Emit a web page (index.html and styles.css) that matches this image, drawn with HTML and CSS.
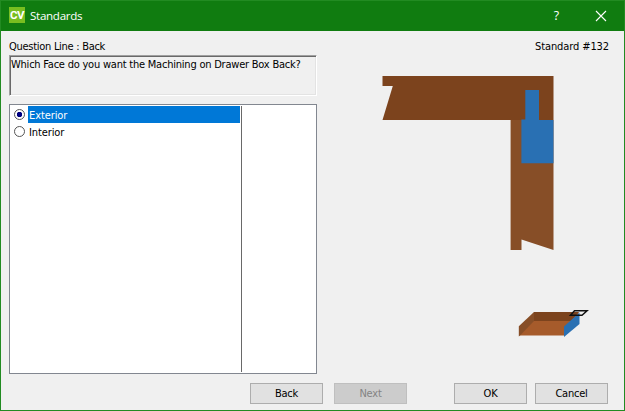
FILE: index.html
```html
<!DOCTYPE html>
<html lang="en">
<head>
<meta charset="utf-8">
<title>Standards</title>
<link rel="stylesheet" href="styles.css">
</head>
<body>
<div class="window">
  <header class="titlebar">
    <span class="logo">CV</span>
    <span class="title">Standards</span>
    <span class="help">?</span>
    <svg class="close" width="12" height="12" viewBox="0 0 12 12"><path d="M1 1L11 11M11 1L1 11" stroke="#fff" stroke-width="1.1" fill="none"/></svg>
  </header>
  <main class="content">
    <section class="left">
      <div class="question-label">Question Line : Back</div>
      <div class="question">Which Face do you want the Machining on Drawer Box Back?</div>
      <div class="list">
        <div class="options">
          <label class="option"><span class="radio checked"></span><span class="option-text selected">Exterior</span></label>
          <label class="option"><span class="radio"></span><span class="option-text">Interior</span></label>
        </div>
        <div class="second"></div>
      </div>
    </section>
    <section class="right">
      <div class="standard">Standard #132</div>
      <svg class="preview" width="284" height="319" viewBox="325 55 284 319">
        <path d="M382.5 76H553.5V120H382.5L392.8 86H382.5Z" fill="#7c431d"/>
        <path d="M510.6 120H553.5V250L521.5 239.5V250H510.6Z" fill="#874e27"/>
        <path d="M525.3 90H539V120H553.5V163.3H521.4V119.5H525.3Z" fill="#2970b3"/>
        <path d="M534 312.5H579L564.5 335.5H519Z" fill="#a65b2b"/>
        <path d="M534 312H579L571 321H534Z" fill="#7c431d"/>
        <path d="M534 312V321L520 335.5L518.8 336.5V326.3Z" fill="#874e27"/>
        <path d="M579.5 312.5V324L564 337V326.5Z" fill="#2970b3"/>
        <path d="M574.5 310.8H587L582 315.2H570.5Z" fill="none" stroke="#111" stroke-width="1.5"/>
      </svg>
    </section>
  </main>
  <footer class="buttons">
    <button class="back">Back</button>
    <button class="next" disabled>Next</button>
    <button class="ok">OK</button>
    <button class="cancel">Cancel</button>
  </footer>
</div>
</body>
</html>
```
FILE: styles.css
```css
* { box-sizing: border-box; }
body { margin: 0; font: 11px/14px "DejaVu Sans Condensed", "DejaVu Sans", sans-serif; font-stretch: condensed; letter-spacing: -0.22px; color: #000; }
.window { width: 625px; height: 411px; background: #f0f0f0; border: 1px solid #228b22; display: flex; flex-direction: column; overflow: hidden; }
.titlebar { height: 30px; flex: none; background: #107c10; color: #fff; display: flex; align-items: center; padding: 0 17px 0 8px; font-family: "Open Sans", sans-serif; font-size: 12px; font-stretch: normal; }
.logo { width: 16px; height: 16px; background: #78be20; font: bold 11.5px/17px Roboto, sans-serif; text-align: center; letter-spacing: -0.4px; margin-top: -2px; }
.title { margin-left: 5px; font-size: 11.6px; letter-spacing: -0.3px; }
.help { margin-left: auto; margin-right: 36px; font-size: 12.5px; margin-top: -1px; }
.close { margin-top: -1px; }
.content { display: flex; height: 343px; flex: none; padding: 8px 15px 0 8px; }
.left { width: 308px; flex: none; }
.question-label { height: 16px; padding-top: 1px; letter-spacing: -0.28px; }
.question { height: 41px; border: 1px solid; border-color: #a0a0a0 #fff #fff #a0a0a0; box-shadow: inset 1px 1px #696969, inset -1px -1px #e3e3e3; padding: 2px 0 0 1px; white-space: nowrap; }
.list { margin-top: 8px; height: 270px; border: 1px solid #828790; background: #fff; display: flex; padding: 1px 0; }
.options { width: 232px; border-right: 1px solid #696969; padding-right: 1px; }
.option { display: flex; align-items: center; height: 17px; padding-left: 4px; }
.radio { width: 11px; height: 11px; border: 1px solid #555; border-radius: 50%; background: #fff; margin-right: 3px; }
.radio.checked { background: radial-gradient(circle, #000080 2.5px, #fff 3px); }
.option-text { flex: 1; height: 17px; line-height: 19px; padding-left: 1px; letter-spacing: -0.1px; }
.selected { background: #0078d7; color: #fff; }
.right { flex: 1; min-width: 0; }
.standard { text-align: right; height: 16px; padding-top: 1px; letter-spacing: -0.1px; }
.preview { display: block; margin-left: 8px; }
.buttons { display: flex; padding: 9px 0 0 249px; }
button { width: 73px; height: 21px; padding: 0; border: 1px solid #adadad; background: #e1e1e1; font: inherit; letter-spacing: inherit; color: #000; line-height: 19px; }
.next { margin-left: 11px; }
.next:disabled { background: #ccc; border-color: #bfbfbf; color: #838383; }
.ok { margin-left: 47px; }
.cancel { margin-left: 8px; }
```
